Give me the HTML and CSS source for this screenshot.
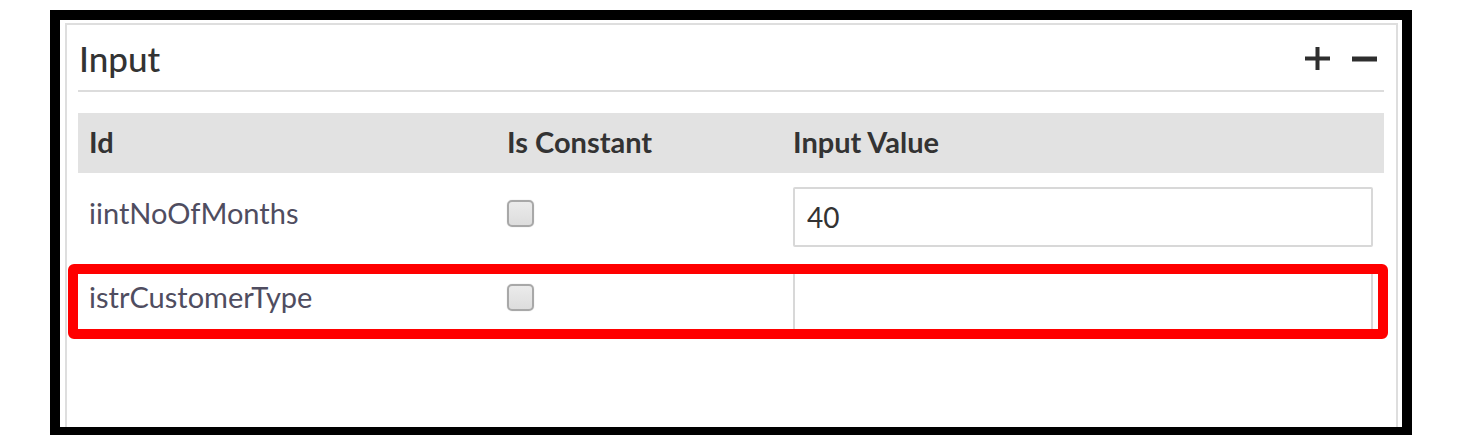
FILE: index.html
```html
<!DOCTYPE html>
<html lang="en">
<head>
<meta charset="utf-8">
<title>Input</title>
<link rel="stylesheet" href="styles.css">
</head>
<body>
<div class="frame">
  <section class="panel">
    <header class="panel-head">
      <h2 class="panel-title">Input</h2>
      <div class="panel-tools">
        <button class="tool" aria-label="Add">
          <svg width="25" height="23" viewBox="0 0 25 23"><path d="M12.5 0V23M0 11.5H25" stroke="#2e2e2e" stroke-width="4" fill="none"/></svg>
        </button>
        <button class="tool" aria-label="Remove">
          <svg width="25" height="23" viewBox="0 0 25 23"><path d="M0 12H25" stroke="#2e2e2e" stroke-width="5" fill="none"/></svg>
        </button>
      </div>
    </header>
    <div class="grid">
      <div class="grid-head">
        <div class="th">Id</div>
        <div class="th">Is Constant</div>
        <div class="th">Input Value</div>
      </div>
      <div class="grid-row">
        <div class="td td-id">iintNoOfMonths</div>
        <div class="td td-check"><input type="checkbox" class="check"></div>
        <div class="td td-value"><input type="text" class="value" value="40"></div>
      </div>
      <div class="grid-row grid-row-marked">
        <div class="td td-id">istrCustomerType</div>
        <div class="td td-check"><input type="checkbox" class="check"></div>
        <div class="td td-value"><input type="text" class="value" value=""></div>
      </div>
    </div>
  </section>
</div>
</body>
</html>
```
FILE: styles.css
```css
html, body {
  margin: 0;
  padding: 0;
  background: #fff;
  overflow: hidden;
  height: 435px;
}
body {
  font-family: Lato, "Open Sans", "Liberation Sans", sans-serif;
  color: #333;
}
.frame {
  box-sizing: border-box;
  margin: 10px 0 0 50px;
  width: 1362px;
  height: 427px;
  border: 10px solid #000;
  padding: 3px 4px 0 5px;
  background: #fff;
}
.panel {
  box-sizing: border-box;
  height: 100%;
  border: 2px solid #dedede;
  border-bottom: none;
  padding: 0 12px 0 11px;
}
.panel-head {
  display: flex;
  align-items: center;
  justify-content: space-between;
  height: 65px;
  border-bottom: 2px solid #dcdcdc;
}
.panel-title {
  margin: 0;
  font-size: 35px;
  font-weight: 500;
  line-height: 42px;
  color: #333;
  padding-left: 1px;
}
.panel-tools {
  display: flex;
  gap: 22px;
  padding-right: 7px;
  padding-top: 1px;
}
.tool {
  border: 0;
  background: none;
  padding: 0;
  margin: 0;
  display: flex;
}
.grid {
  margin-top: 21px;
}
.grid-head, .grid-row {
  display: grid;
  grid-template-columns: 418px 286px 1fr;
  align-items: center;
}
.grid-head {
  height: 60px;
  background: #e2e2e2;
}
.grid-row {
  height: 84px;
  position: relative;
}
.th {
  padding: 0 11px 4px;
  font-size: 29px;
  font-weight: 700;
  line-height: 35px;
  color: #333;
}
.td {
  padding: 0 11px;
}
.td-id {
  font-size: 29px;
  line-height: 35px;
  color: #4f4d60;
  padding-bottom: 5px;
}
.td-check {
  display: flex;
  padding-bottom: 3px;
}
.check {
  appearance: none;
  -webkit-appearance: none;
  box-sizing: border-box;
  width: 27px;
  height: 27px;
  margin: 0;
  border: 2px solid #a8a8a8;
  border-radius: 5px;
  background: linear-gradient(#ebebeb, #dddddd);
  box-shadow: 0 0 1px #bbb;
}
.td-value {
  display: flex;
}
.value {
  box-sizing: border-box;
  width: 100%;
  height: 60px;
  margin: 4px 0 0;
  border: 2px solid #d8d8d8;
  border-radius: 2px;
  padding: 0 12px;
  font-family: Lato, "Open Sans", "Liberation Sans", sans-serif;
  font-size: 28px;
  color: #333;
  background: #fff;
  outline: none;
}
.grid-row-marked::after {
  content: "";
  position: absolute;
  left: -10px;
  right: -4px;
  top: 7px;
  bottom: 2px;
  border: 10px solid #ff0000;
  border-radius: 6px;
  pointer-events: none;
}
```
